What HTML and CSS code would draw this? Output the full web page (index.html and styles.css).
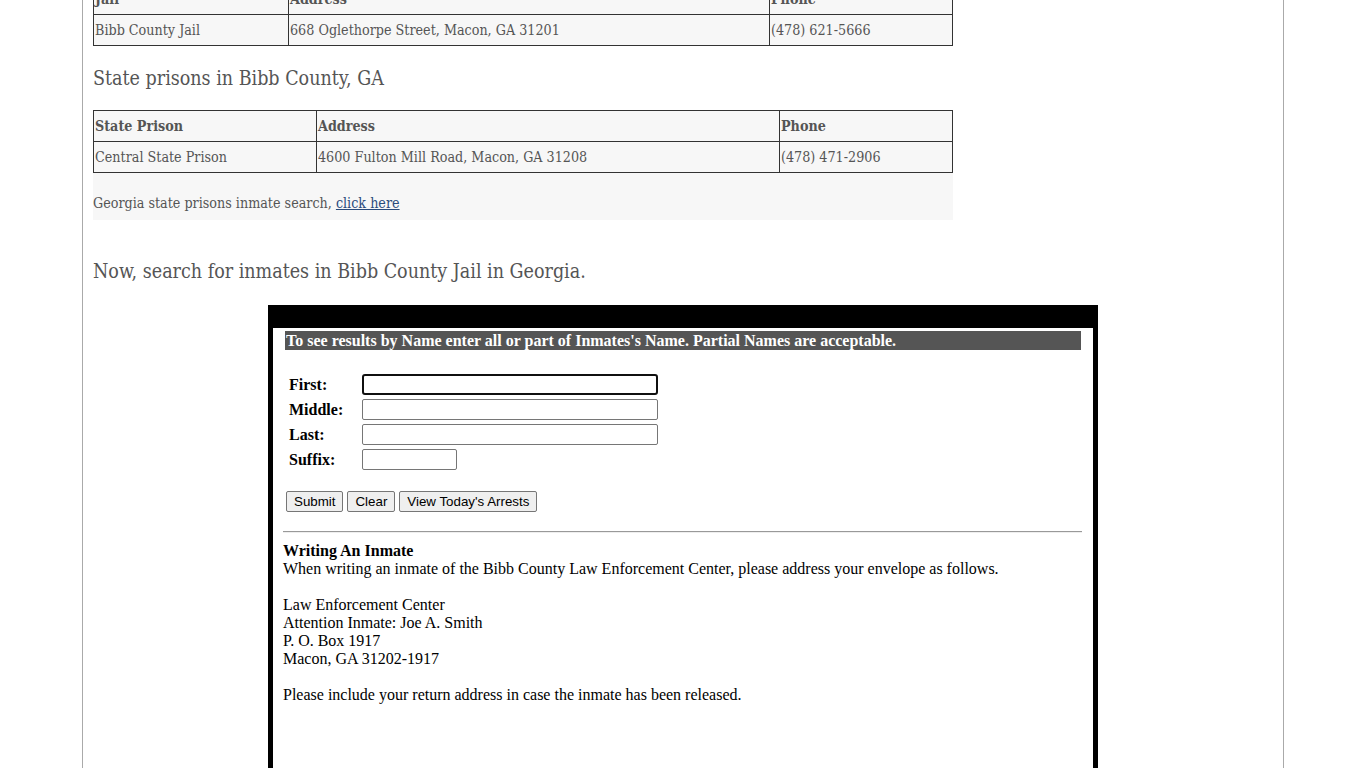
FILE: index.html
```html
<!DOCTYPE html>
<html lang="en">
<head>
  <meta charset="UTF-8">
  <title>Bibb County Jail Inmate Search</title>
  <link rel="stylesheet" href="styles.css">
</head>
<body>
  <div class="page">
    <!-- County jail -->
    <table class="info jail-table">
      <tr><th class="col-name">Jail</th><th class="col-addr">Address</th><th>Phone</th></tr>
      <tr><td>Bibb County Jail</td><td>668 Oglethorpe Street, Macon, GA 31201</td><td>(478) 621-5666</td></tr>
    </table>

    <h3 class="section-title">State prisons in Bibb County, GA</h3>

    <!-- State prisons -->
    <table class="info prison-table">
      <tr><th class="col-name">State Prison</th><th class="col-addr">Address</th><th>Phone</th></tr>
      <tr><td>Central State Prison</td><td>4600 Fulton Mill Road, Macon, GA 31208</td><td>(478) 471-2906</td></tr>
    </table>

    <div class="note">
      <p>Georgia state prisons inmate search, <a href="#">click here</a></p>
    </div>

    <h3 class="section-title search-title">Now, search for inmates in Bibb County Jail in Georgia.</h3>

    <!-- Inmate lookup panel -->
    <div class="lookup">
      <div class="lookup-head">To see results by Name enter all or part of Inmates's Name. Partial Names are acceptable.</div>

      <form class="name-form">
        <label for="first">First:</label>
        <input type="text" id="first" class="wide focused">
        <label for="middle">Middle:</label>
        <input type="text" id="middle" class="wide">
        <label for="last">Last:</label>
        <input type="text" id="last" class="wide">
        <label for="suffix">Suffix:</label>
        <input type="text" id="suffix" class="short">
      </form>

      <div class="actions">
        <button type="button">Submit</button>
        <button type="button">Clear</button>
        <button type="button">View Today's Arrests</button>
      </div>

      <hr>

      <div class="letter">
        <b>Writing An Inmate</b><br>
        When writing an inmate of the Bibb County Law Enforcement Center, please address your envelope as follows.<br>
        <br>
        Law Enforcement Center<br>
        Attention Inmate: Joe A. Smith<br>
        P. O. Box 1917<br>
        Macon, GA 31202-1917<br>
        <br>
        Please include your return address in case the inmate has been released.
      </div>
    </div>
  </div>
</body>
</html>
```

FILE: styles.css
```css
/* Basic page */
body {
  margin: 0;
  background: #fff;
  font-family: "DejaVu Serif", serif;
  font-stretch: condensed;
  color: #555;
}

/* Centered content column with thin side rules */
.page {
  width: 1180px;
  margin: -17px auto 0;
  padding: 0 10px 40px;
  border-left: 1px solid #aaa;
  border-right: 1px solid #aaa;
}

/* Info tables */
.info {
  width: 860px;
  border-collapse: collapse;
  font-size: 14.2px;
}

.info th,
.info td {
  height: 30px;
  padding: 0 1px;
  border: 1px solid #333;
  background: #f7f7f7;
  text-align: left;
  font-weight: normal;
}

.info th {
  font-weight: bold;
}

.jail-table .col-name { width: 192px; }
.jail-table .col-addr { width: 478px; }
.prison-table .col-name { width: 220px; }
.prison-table .col-addr { width: 460px; }

/* Section headings */
.section-title {
  margin: 21px 0 19px;
  font-size: 19.5px;
  font-weight: normal;
  line-height: 24px;
}

.search-title {
  margin: 40px 0 21px;
}

/* Grey note strip under the prison table */
.note {
  width: 860px;
  background: #f7f7f7;
}

.note p {
  margin: 0;
  padding: 21px 0 8px;
  font-size: 14.2px;
  line-height: 18px;
}

.note a {
  color: #2a4b7c;
}

/* Lookup panel */
.lookup {
  width: 810px;
  min-height: 480px;
  margin: 0 auto;
  padding: 3px 5px 0;
  border: 5px solid #000;
  border-top-width: 23px;
  font-family: "Liberation Serif", "Times New Roman", serif;
  font-stretch: normal;
  font-size: 16px;
  color: #000;
}

.lookup-head {
  margin: 0 7px;
  height: 19px;
  padding-left: 1px;
  background: #555;
  color: #fff;
  font-weight: bold;
  line-height: 19px;
}

.name-form {
  display: grid;
  grid-template-columns: 73px auto;
  row-gap: 4px;
  justify-items: start;
  align-items: center;
  margin: 24px 0 0 11px;
}

.name-form label {
  font-weight: bold;
}

.name-form input {
  box-sizing: border-box;
  height: 21px;
  border: 1px solid #767676;
  border-radius: 2px;
  padding: 1px 2px;
}

.name-form .wide { width: 296px; }
.name-form .short { width: 95px; }

.name-form .focused {
  border: 2px solid #101010;
  border-radius: 3px;
}

/* Form buttons */
.actions {
  display: flex;
  gap: 4px;
  margin: 21px 0 0 8px;
}

.actions button {
  height: 21px;
  padding: 1px 7px;
  font-family: Arial, "Liberation Sans", sans-serif;
  font-size: 13.33px;
  color: #000;
  background: #efefef;
  border: 1px solid #767676;
  border-radius: 2px;
}

.lookup hr {
  margin: 19px 0 9px 5px;
  border: 0;
  border-top: 1px solid #999;
  border-bottom: 1px solid #eee;
  width: 799px;
}

.letter {
  margin-left: 5px;
  line-height: 18px;
}
```
